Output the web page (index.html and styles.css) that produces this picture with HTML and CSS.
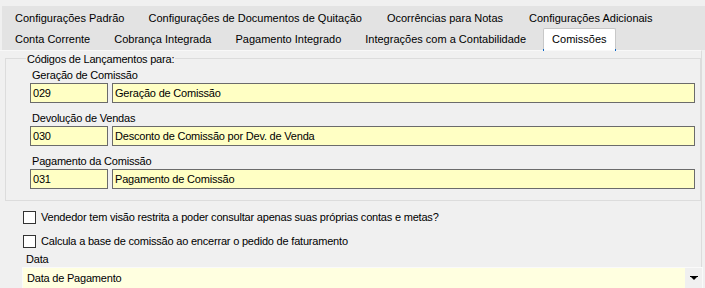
FILE: index.html
```html
<!DOCTYPE html>
<html lang="pt">
<head>
<meta charset="utf-8">
<link rel="stylesheet" href="styles.css">
</head>
<body>
<div class="tabstrip">
  <div class="tabrow">
    <span class="tab">Configurações Padrão</span>
    <span class="tab">Configurações de Documentos de Quitação</span>
    <span class="tab">Ocorrências para Notas</span>
    <span class="tab">Configurações Adicionais</span>
  </div>
  <div class="tabrow">
    <span class="tab">Conta Corrente</span>
    <span class="tab">Cobrança Integrada</span>
    <span class="tab">Pagamento Integrado</span>
    <span class="tab">Integrações com a Contabilidade</span>
    <span class="tab active">Comissões</span>
  </div>
</div>
<div class="panel">
  <fieldset class="group">
    <legend>Códigos de Lançamentos para:</legend>
    <div class="field">
      <div class="flabel">Geração de Comissão</div>
      <div class="inputs"><div class="box code">029</div><div class="box desc">Geração de Comissão</div></div>
    </div>
    <div class="field">
      <div class="flabel">Devolução de Vendas</div>
      <div class="inputs"><div class="box code">030</div><div class="box desc">Desconto de Comissão por Dev. de Venda</div></div>
    </div>
    <div class="field">
      <div class="flabel">Pagamento da Comissão</div>
      <div class="inputs"><div class="box code">031</div><div class="box desc">Pagamento de Comissão</div></div>
    </div>
  </fieldset>
  <label class="check first"><span class="cb"></span>Vendedor tem visão restrita a poder consultar apenas suas próprias contas e metas?</label>
  <label class="check"><span class="cb"></span>Calcula a base de comissão ao encerrar o pedido de faturamento</label>
  <div class="datalabel">Data</div>
  <div class="combo">
    <span class="combotext">Data de Pagamento</span>
    <span class="dropbtn"><svg width="8" height="5" viewBox="0 0 8 5"><rect x="0" y="0" width="8" height="1" fill="#000"/><polygon points="1,1 7,1 4,4" fill="#000"/></svg></span>
  </div>
</div>
</body>
</html>
```
FILE: styles.css
```css
html, body {
  margin: 0;
  padding: 0;
  background: #f0f0f0;
  font-family: "Liberation Sans", Arial, sans-serif;
  font-size: 11px;
  letter-spacing: -0.2px;
  color: #000;
  overflow: hidden;
  height: 288px;
}
.tabstrip {
  margin: 6px 0 0 2px;
  background: #e3e3e3;
  height: 44px;
}
.tabrow {
  display: flex;
  height: 23px;
  padding-left: 1px;
  align-items: center;
  letter-spacing: 0;
}
.tabrow:first-child {
  padding-top: 1px;
  box-sizing: border-box;
}
.tabrow + .tabrow {
  height: 21px;
  align-items: flex-end;
}
.tab {
  padding: 0 12px;
  white-space: nowrap;
  line-height: 20px;
}
.tabrow:first-child .tab:nth-child(n+3) {
  padding: 0 13px;
}
.tabrow + .tabrow .tab {
  line-height: 20px;
  padding-bottom: 1px;
}
.tabrow + .tabrow .tab.active {
  background: #fff;
  border: 1px solid #c8c8c8;
  border-bottom: none;
  border-radius: 2px 2px 0 0;
  margin-left: 5px;
  padding: 0 8px 1px 8px;
  height: 20px;
  position: relative;
}
.tab.active::before, .tab.active::after {
  content: "";
  position: absolute;
  bottom: -1px;
  width: 1px;
  height: 2px;
  background: #0a66c8;
}
.tab.active::before { left: -1px; }
.tab.active::after { right: -1px; }
.panel {
  height: 238px;
  margin-right: 3px;
  border-right: 1px solid #dcdcdc;
  border-top: 1px solid #f8f8f8;
  padding-left: 5px;
}
.group {
  margin: 0;
  width: 694px;
  box-sizing: border-box;
  height: 150px;
  border: 1px solid #dcdcdc;
  padding: 0 5px 0 24px;
}
.group legend {
  padding: 0 1px;
  margin-left: -4px;
  line-height: 14px;
  position: relative;
  top: 1px;
}
.field {
  margin-top: 2px;
}
.field + .field {
  margin-top: 7px;
}
.flabel {
  padding-left: 2px;
  line-height: 16px;
  height: 16px;
}
.inputs {
  display: flex;
  gap: 4px;
}
.box {
  height: 20px;
  box-sizing: border-box;
  border: 1px solid #6b6b6b;
  background: #ffffc4;
  line-height: 18px;
  padding-left: 2px;
  white-space: nowrap;
}
.code { width: 78px; }
.desc { width: 583px; }
.check {
  display: flex;
  align-items: center;
  margin-left: 18px;
  height: 16px;
}
.check.first { margin-top: 8px; }
.check + .check { margin-top: 8px; }
.cb {
  width: 11px;
  height: 11px;
  border: 1px solid #333;
  background: #fff;
  margin-right: 5px;
}
.datalabel {
  margin: 2px 0 0 21px;
  line-height: 16px;
}
.combo {
  margin: 0 0 0 17px;
  width: 681px;
  height: 22px;
  box-sizing: border-box;
  border: 1px solid #fafafa;
  background: #ffffe0;
  display: flex;
  align-items: center;
  justify-content: space-between;
}
.combotext {
  padding-left: 4px;
}
.dropbtn {
  width: 17px;
  height: 20px;
  background: #f0f0f0;
  display: flex;
  align-items: center;
  justify-content: center;
}
```
